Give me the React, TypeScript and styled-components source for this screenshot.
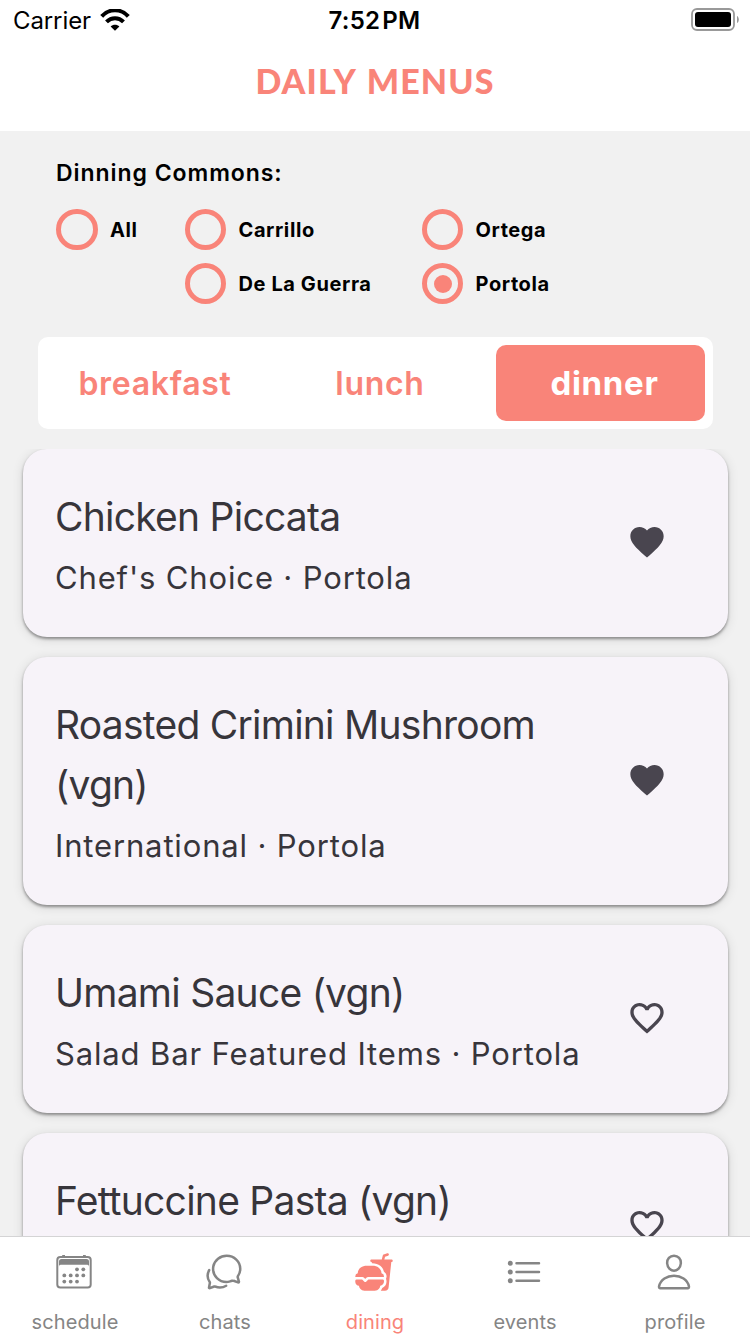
import React, { useState } from "react";
import styled, { createGlobalStyle, css } from "styled-components";
import {
  IoChatbubblesOutline,
  IoFastFood,
  IoListOutline,
  IoPersonOutline,
} from "react-icons/io5";
import { MdFavorite, MdFavoriteBorder } from "react-icons/md";

const coral = "#f98479";

const GlobalStyle = createGlobalStyle`
  * { box-sizing: border-box; }
  body {
    margin: 0;
    font-family: Inter, "Liberation Sans", sans-serif;
    background: #f1f1f1;
  }
  button { font: inherit; border: 0; padding: 0; background: none; }
`;

const Screen = styled.div`
  display: flex;
  flex-direction: column;
  width: 750px;
  height: 1334px;
  overflow: hidden;
  background: #f1f1f1;
`;

const Header = styled.header`
  flex: none;
  height: 131px;
  background: #fff;
`;

const StatusBar = styled.div`
  display: grid;
  grid-template-columns: 1fr auto 1fr;
  align-items: center;
  height: 40px;
  padding: 0 11px 0 13px;
  color: #000;
`;

const Carrier = styled.div`
  display: flex;
  align-items: center;
  gap: 9px;
  font-size: 24px;
  letter-spacing: -0.1px;
`;

const Clock = styled.div`
  padding-right: 3px;
  font-size: 24px;
  font-weight: 600;
  letter-spacing: 0.2px;
  word-spacing: -4px;
`;

const BatterySlot = styled.div`
  display: flex;
  justify-content: flex-end;
`;

const Title = styled.h1`
  margin: 18px 0 0;
  text-align: center;
  font: 900 34px/46px Lato, sans-serif;
  letter-spacing: 1.1px;
  word-spacing: 2px;
  color: ${coral};
`;

const Filters = styled.section`
  flex: none;
  height: 206px;
  padding: 24px 56px 0;
`;

const FilterTitle = styled.h2`
  margin: 0 0 18px;
  font-size: 23px;
  line-height: 36px;
  font-weight: 600;
  letter-spacing: 0.95px;
  color: #000;
`;

const RadioColumns = styled.div`
  display: grid;
  grid-template-columns: 128.6px 237px auto;
`;

const RadioColumn = styled.div`
  display: flex;
  flex-direction: column;
  gap: 13px;
`;

const Radio = styled.button`
  display: flex;
  align-items: center;
  gap: 12.4px;
  height: 41px;
  font-size: 20px;
  font-weight: 700;
  letter-spacing: 0.6px;
  white-space: nowrap;
  color: #000;
`;

const RadioRing = styled.span<{ $on: boolean }>`
  display: grid;
  place-items: center;
  width: 41.5px;
  height: 41.5px;
  border: 5px solid ${coral};
  border-radius: 50%;
  &::after {
    content: "";
    width: 18px;
    height: 18px;
    margin-left: 1px;
    border-radius: 50%;
    background: ${(p) => (p.$on ? coral : "transparent")};
  }
`;

const Segments = styled.div`
  flex: none;
  display: grid;
  grid-template-columns: repeat(3, 1fr);
  width: 675px;
  height: 92px;
  margin: 0 0 20px 38px;
  border-radius: 10px;
  background: #fff;
`;

const Segment = styled.button<{ $active: boolean }>`
  margin: 8px;
  padding-left: 9px;
  border-radius: 10px;
  font-size: 32px;
  font-weight: 600;
  letter-spacing: 0.7px;
  color: ${coral};
  ${(p) =>
    p.$active &&
    css`
      padding-left: 8px;
      font-size: 33px;
      font-weight: 700;
      color: #fff;
      background: ${coral};
    `}
`;

const List = styled.main`
  flex: 1;
  min-height: 0;
  overflow: hidden;
  display: flex;
  flex-direction: column;
  gap: 20px;
  padding: 0 22px 0 23px;
`;

const Card = styled.article`
  flex: none;
  display: flex;
  align-items: center;
  justify-content: space-between;
  padding: 38px 61px 33px 32px;
  border-radius: 24px;
  background: #f7f3f9;
  box-shadow: 0 2px 3px rgba(0, 0, 0, 0.38), 0 2px 12px rgba(0, 0, 0, 0.12);
`;

const Dish = styled.div`
  width: 520px;
  color: #37353b;
  white-space: nowrap;
`;

const DishName = styled.h3`
  margin: 0;
  font-size: 39px;
  line-height: 60px;
  font-weight: 400;
  letter-spacing: -0.75px;
  white-space: normal;
`;

const DishSource = styled.p`
  margin: 0;
  min-height: 57px;
  padding-top: 5px;
  font-size: 31px;
  line-height: 52px;
  letter-spacing: 0.85px;
`;

const Heart = styled.button`
  display: flex;
  margin-bottom: 7px;
  font-size: 40px;
  color: #49454f;
`;

const TabBar = styled.nav`
  flex: none;
  display: grid;
  grid-template-columns: repeat(5, 1fr);
  height: 98px;
  border-top: 1px solid #d4d4d5;
  background: #fff;
`;

const Tab = styled.button<{ $active: boolean }>`
  display: flex;
  flex-direction: column;
  align-items: center;
  gap: 17px;
  padding-top: 15px;
  font-size: 20px;
  line-height: 26px;
  letter-spacing: 0.1px;
  color: ${(p) => (p.$active ? coral : "#858585")};
  svg { width: 40px; height: 40px; margin-right: 2px; }
`;

const WifiIcon = () => (
  <svg width="30" height="22" viewBox="0 0 30 22" fill="none" stroke="#000">
    <path d="M1.7 7.3C9-.7 21-.7 28.3 7.3" strokeWidth="4" />
    <path d="M6.5 12.8c4.8-4.9 12.2-4.9 17 0" strokeWidth="4" />
    <path d="M10.6 17.4c2.4-2.3 6.4-2.3 8.8 0L15 21.8z" fill="#000" stroke="none" />
  </svg>
);

const BatteryIcon = () => (
  <svg width="48" height="24" viewBox="0 0 48 24">
    <rect x="1" y="1" width="42" height="21" rx="5" fill="none" stroke="#999" strokeWidth="1.8" />
    <rect x="4" y="4" width="36" height="15" rx="3" fill="#000" />
    <path d="M46 8c2.4 1 2.4 6 0 7z" fill="#999" />
  </svg>
);

const calendarDots = [
  [23, 17.3], [29.3, 17.3],
  [10.3, 23.4], [16.7, 23.4], [23, 23.4], [29.3, 23.4],
  [10.3, 29.6], [16.7, 29.6], [23, 29.6],
];

const CalendarIcon = () => (
  <svg viewBox="0 0 40 40" fill="currentColor">
    <rect x="3.3" y="5" width="33.4" height="30.5" rx="3" fill="none" stroke="currentColor" strokeWidth="2" />
    <path d="M5 14.5V9.5Q5 7 7.5 7h25Q35 7 35 9.5v5q0-1.8-1.6-1.8H6.6Q5 12.7 5 14.5z" />
    <path d="M9.6 5V3M30.4 5V3" stroke="currentColor" strokeWidth="2.8" />
    {calendarDots.map(([x, y]) => (
      <circle key={`${x}-${y}`} cx={x} cy={y} r="1.9" />
    ))}
  </svg>
);

const commons = [["All"], ["Carrillo", "De La Guerra"], ["Ortega", "Portola"]];
const meals = ["breakfast", "lunch", "dinner"];
const dishes = [
  { name: "Chicken Piccata", source: "Chef's Choice · Portola", liked: true },
  { name: "Roasted Crimini Mushroom (vgn)", source: "International · Portola", liked: true },
  { name: "Umami Sauce (vgn)", source: "Salad Bar Featured Items · Portola", liked: false },
  { name: "Fettuccine Pasta (vgn)", source: "", liked: false },
];
const tabs = [
  { label: "schedule", Icon: CalendarIcon },
  { label: "chats", Icon: IoChatbubblesOutline },
  { label: "dining", Icon: IoFastFood },
  { label: "events", Icon: IoListOutline },
  { label: "profile", Icon: IoPersonOutline },
];

export default function App() {
  const [common, setCommon] = useState("Portola");
  const [meal, setMeal] = useState("dinner");
  return (
    <Screen>
      <GlobalStyle />
      <Header>
        <StatusBar>
          <Carrier>Carrier <WifiIcon /></Carrier>
          <Clock>7:52 PM</Clock>
          <BatterySlot><BatteryIcon /></BatterySlot>
        </StatusBar>
        <Title>DAILY MENUS</Title>
      </Header>
      <Filters>
        <FilterTitle>Dinning Commons:</FilterTitle>
        <RadioColumns>
          {commons.map((column) => (
            <RadioColumn key={column[0]}>
              {column.map((name) => (
                <Radio key={name} onClick={() => setCommon(name)}>
                  <RadioRing $on={name === common} />
                  {name}
                </Radio>
              ))}
            </RadioColumn>
          ))}
        </RadioColumns>
      </Filters>
      <Segments>
        {meals.map((name) => (
          <Segment key={name} $active={name === meal} onClick={() => setMeal(name)}>
            {name}
          </Segment>
        ))}
      </Segments>
      <List>
        {dishes.map((dish) => (
          <Card key={dish.name}>
            <Dish>
              <DishName>{dish.name}</DishName>
              <DishSource>{dish.source}</DishSource>
            </Dish>
            <Heart>{dish.liked ? <MdFavorite /> : <MdFavoriteBorder />}</Heart>
          </Card>
        ))}
      </List>
      <TabBar>
        {tabs.map(({ label, Icon }) => (
          <Tab key={label} $active={label === "dining"}>
            <Icon />
            {label}
          </Tab>
        ))}
      </TabBar>
    </Screen>
  );
}
